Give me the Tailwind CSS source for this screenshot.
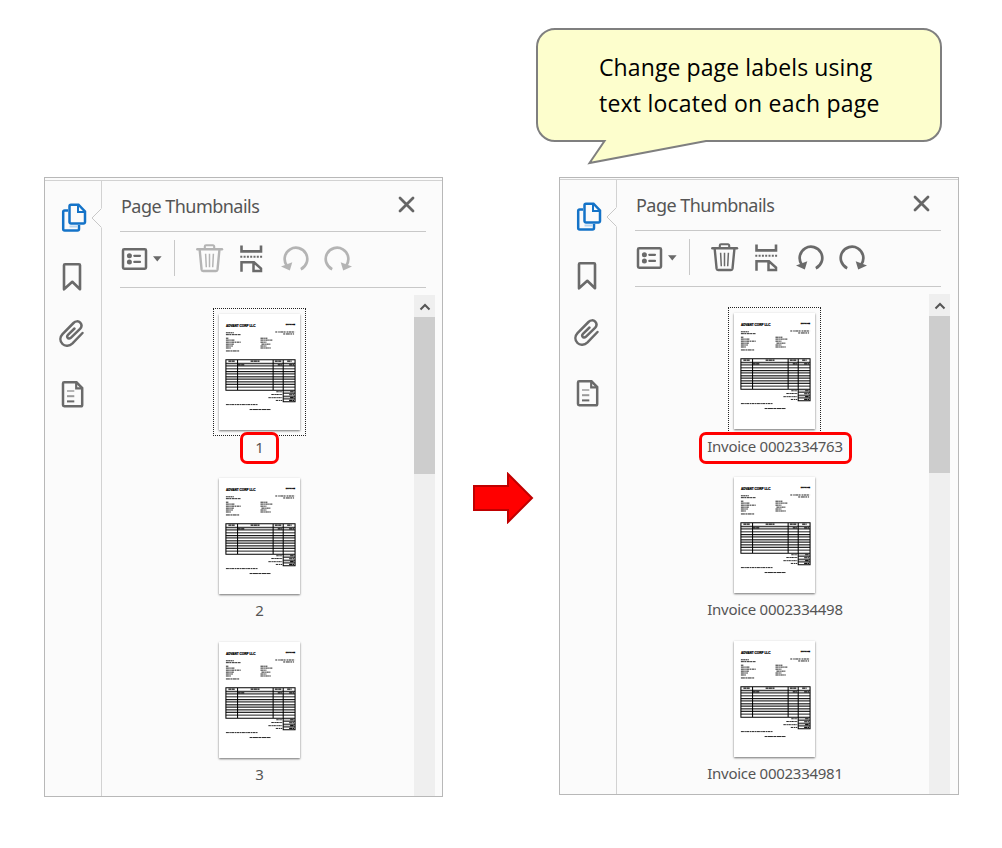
<!DOCTYPE html>
<html lang="en">
<head>
<meta charset="utf-8">
<title>Page labels</title>
<script src="https://cdn.jsdelivr.net/npm/@tailwindcss/browser@4"></script>
</head>
<body class="bg-white">
<svg class="hidden">
  <symbol id="pages" viewBox="60 201 28 32">
    <path d="M68 210.600H64.700a1.500 1.500 0 0 0-1.500 1.500V229a1.500 1.500 0 0 0 1.500 1.500H77.500a1.500 1.500 0 0 0 1.500-1.500V225" fill="none" stroke="currentColor" stroke-width="2.500"/>
    <path d="M69.500 226.500H77.500" stroke="#b5d5f2" stroke-width="2"/>
    <path d="M71 204.700H78.500L85 211.500V222.100a1.500 1.500 0 0 1-1.500 1.500H71a1.500 1.500 0 0 1-1.500-1.500V206.200a1.500 1.500 0 0 1 1.500-1.500Z" fill="#fbfbfb" stroke="currentColor" stroke-width="2.500"/>
    <path d="M78 204.500V212H85.500" fill="none" stroke="currentColor" stroke-width="2"/>
  </symbol>
  <symbol id="bookmark" viewBox="60 261 28 32">
    <path d="M65 264.200H79a1 1 0 0 1 1 1V289.300L72.300 281.800L64 289.300V265.200a1 1 0 0 1 1-1Z" fill="none" stroke="currentColor" stroke-width="2.600" stroke-linejoin="round"/>
  </symbol>
  <symbol id="clip" viewBox="58 318 28 32">
    <path d="M82.500 333L72.500 343.300C69.500 346.200 65 346.600 62.500 344C59.500 341 59.900 337 62.500 334.200L73.500 323C75.500 321 78.500 320.800 80.200 322.600C82 324.500 81.700 327 80 328.900L70.800 337.800C69.500 338.900 68.300 338.600 67.600 337.700C66.900 336.800 67.200 335.600 68.200 334.600L74.500 328.500" fill="none" stroke="currentColor" stroke-width="2.500" stroke-linecap="round"/>
  </symbol>
  <symbol id="doc" viewBox="60 379 28 32">
    <path d="M64.200 382.300H76.500L82.200 388V405a1.300 1.300 0 0 1-1.300 1.300H64.200a1.200 1.200 0 0 1-1.200-1.200V383.500a1.200 1.200 0 0 1 1.200-1.200Z" fill="none" stroke="currentColor" stroke-width="2.500"/>
    <path d="M76.200 382.500V388.300H82" fill="none" stroke="currentColor" stroke-width="2.200"/>
    <path d="M67 391H74.300" stroke="#b5b5b5" stroke-width="2"/>
    <path d="M67 396.200H74.300" stroke="#999" stroke-width="2"/>
    <path d="M67 401.400H74.300" stroke="currentColor" stroke-width="2"/>
  </symbol>
  <symbol id="options" viewBox="120 242 44 32">
    <rect x="123" y="249.200" width="23" height="19.500" rx="1.200" fill="none" stroke="currentColor" stroke-width="2.500"/>
    <circle cx="129.400" cy="255.800" r="2.500" fill="currentColor"/><circle cx="129.400" cy="261.900" r="2.500" fill="currentColor"/>
    <path d="M134.300 255.800H140M134.300 261.900H140" stroke="currentColor" stroke-width="2.200" stroke-linecap="round"/>
    <path d="M153 256.300H161.600L157.300 261.500Z" fill="currentColor"/>
  </symbol>
  <symbol id="trash" viewBox="195 242 30 32">
    <path d="M197.300 249.300H222" stroke="currentColor" stroke-width="2.400" stroke-linecap="round"/>
    <path d="M204.800 248.500V246.500a1.200 1.200 0 0 1 1.200-1.200H213a1.200 1.200 0 0 1 1.200 1.200V248.500" fill="none" stroke="currentColor" stroke-width="2.100"/>
    <path d="M199.700 250L201.600 269.700a1.500 1.500 0 0 0 1.500 1.300H216a1.500 1.500 0 0 0 1.500-1.300L219.400 250" fill="none" stroke="currentColor" stroke-width="2.400"/>
    <path d="M205.600 253.700L206.300 267.300M209.500 253.700V267.300M213.400 253.700L212.700 267.300" stroke="currentColor" stroke-width="1.500"/>
  </symbol>
  <symbol id="split" viewBox="237 242 28 32">
    <path d="M241.500 245.500V251.400H261V245.500" fill="none" stroke="currentColor" stroke-width="2.600"/>
    <path d="M240.300 256.800H262.300" stroke="currentColor" stroke-width="1.900" stroke-dasharray="2 1.300"/>
    <path d="M241.500 271.800V262.300H254L261 268.500V271H253.500V263" fill="none" stroke="currentColor" stroke-width="2.500"/>
  </symbol>
  <symbol id="turn" viewBox="280 242 32 32">
    <path d="M286.600 265.300A11.300 11.300 0 1 1 300.800 269.200" fill="none" stroke="currentColor" stroke-width="2.700"/>
    <path d="M281 266.600L292.300 262.200L289.800 270.500Z" fill="currentColor"/>
  </symbol>
  <symbol id="sheet" viewBox="0 0 82 117">
    <g font-family="Liberation Sans, sans-serif" font-weight="bold" fill="#000">
      <text x="7" y="13" font-size="3.600" textLength="30" lengthAdjust="spacingAndGlyphs" stroke="#000" stroke-width=".25">ADVANT CORP LLC</text>
      <text x="67.500" y="11" font-size="2.500" textLength="9.500" lengthAdjust="spacingAndGlyphs" stroke="#000" stroke-width=".3">INVOICE</text>
    </g>
    <g stroke="#000" stroke-width="1" fill="none" opacity=".85">
      <path d="M7 18.800H15" stroke-dasharray="2 .3"/><path d="M7 20.700H22" stroke-dasharray="3 .4 2 .5"/>
      <path d="M57 18H77" stroke-dasharray="2 1 1.500 .5 3 .4"/><path d="M65 20H76" stroke-dasharray="2 .7 4 .5"/>
      <path d="M7 24.300H9.500M7 26.200H16M7 28.300H22M7 30.300H15M7 32.200H14M7 34.200H12" stroke-dasharray="3 .4 1.500 .5"/>
      <path d="M42 24.300H49M42 26.200H54M42 28.300H48M43 30.300H52M42 32.200H48M42 34.200H52.500" stroke-dasharray="2.500 .4 1.500 .5"/>
      <path d="M7 37.200H20.500" stroke-dasharray="4 .5 2 .4"/>
      <path d="M7 91.500H39" stroke-dasharray="3 .5 1.500 .4"/><path d="M31 96.500H52.500" stroke-dasharray="3 .4 5 .4"/>
      <path d="M58 78.500H64M53 81.300H64M50 84.500H64M57.500 87.300H64" stroke-dasharray="2.500 .6 1.500 .4"/>
    </g>
    <path d="M7 49.700H77V52.500H7zM7 58H77v2.500H7zM7 63.300H77v2.500H7zM7 68.500H77v2.500H7zM65 77.500H77v2.500H65zM65 83.300H77v2.500H65z" fill="#ccc"/>
    <path d="M7 46H77V77H7ZM18.800 46V77M54.800 46V77M65 46V88.600H77V77" fill="none" stroke="#000" stroke-width="1.050"/>
    <path d="M7 49.700H77M7 52.400H77M7 55.300H77M7 58H77M7 60.500H77M7 63.300H77M7 65.800H77M7 68.400H77M7 71.100H77M7 73.800H77M65 80H77M65 83H77M65 85.800H77" stroke="#000" stroke-width=".9"/>
    <path d="M9.500 47.500H16M32 47.500H41M56.500 47.500H63.500M69 47.500H73.500M19 51.200H26M59.500 51.200H64M71 51.200H76M72 78.500H76M71 81.500H76M72 84.500H76M71 87.200H76" stroke="#111" stroke-width="1.200" stroke-dasharray="3 .4"/>
  </symbol>
</svg>

<div class="w-[1002px] h-[848px] overflow-hidden pt-[27px]">
  <div class="relative ml-[535px] w-[408px] h-[138px] mb-[12px] pl-[64px] pt-[22px]">
    <svg class="absolute inset-0" width="408" height="138" viewBox="535 27 408 138">
      <path d="M555 29H923A18 18 0 0 1 941 47V123A18 18 0 0 1 923 141H706L589.500 163L604.500 141H555A18 18 0 0 1 537 123V47A18 18 0 0 1 555 29Z" fill="#fdfecd" stroke="#7f7f7f" stroke-width="2"/>
    </svg>
    <p class="relative font-['Open_Sans',sans-serif] text-[23px] leading-[36px] text-black whitespace-nowrap"><span class="tracking-[0.1px]">Change page labels using</span><br><span class="tracking-[0.23px]">text located on each page</span></p>
  </div>

  <div class="flex items-start pl-[44px] font-['Noto_Sans',sans-serif] text-[#555]">
    <section class="w-[399px] h-[620px] border border-[#b8b8b8] bg-[#fbfbfb] flex">
      <nav class="w-[57px] shrink-0 border-t border-r border-[#d2d2d2] mt-[2px] relative flex flex-col pl-[15px] pt-[20px] text-[#6a6a6a]">
        <svg class="w-[28px] h-[32px] text-[#1473c8]"><use href="#pages"/></svg>
        <svg class="w-[28px] h-[32px] mt-[28px]"><use href="#bookmark"/></svg>
        <svg class="w-[28px] h-[32px] mt-[25px] -ml-[2px]"><use href="#clip"/></svg>
        <svg class="w-[28px] h-[32px] mt-[29px]"><use href="#doc"/></svg>
        <svg class="absolute left-[46px] top-[27px]" width="12" height="20"><path d="M11 0L1.500 10L11 20" fill="#fbfbfb"/><path d="M12 0H10V20H12" fill="#fbfbfb"/><path d="M10.500 0.500L1 10L10.500 19.500" fill="none" stroke="#c8c8c8"/></svg>
      </nav>
      <div class="flex-1 border-t border-[#d2d2d2] mt-[2px] flex flex-col min-w-0">
        <header class="ml-[18px] w-[306px] h-[51px] border-b border-[#c8c8c8] flex justify-between items-center pl-px pr-[11px]">
          <h2 class="text-[18px] leading-[24px] tracking-[-0.53px] whitespace-nowrap">Page Thumbnails</h2>
          <svg class="mb-[3px]" width="17" height="17" viewBox="0 0 17 17"><path d="M2 2L15 15M15 2L2 15" stroke="#666" stroke-width="2.800" stroke-linecap="round"/></svg>
        </header>
        <div class="ml-[18px] w-[306px] h-[56px] border-b border-[#c8c8c8] flex items-center pb-[3px] text-[#6a6a6a]">
          <svg class="w-[44px] h-[32px]"><use href="#options"/></svg>
          <i class="w-px h-[36px] bg-[#c8c8c8] ml-[10px]"></i>
          <svg class="w-[30px] h-[32px] ml-[20px] text-[#b4b4b4]"><use href="#trash"/></svg>
          <svg class="w-[28px] h-[32px] ml-[12px]"><use href="#split"/></svg>
          <svg class="w-[32px] h-[32px] ml-[15px] text-[#b4b4b4]"><use href="#turn"/></svg>
          <svg class="w-[32px] h-[32px] ml-[9px] -scale-x-100 text-[#b4b4b4]"><use href="#turn"/></svg>
        </div>
        <div class="flex flex-1 pt-[7px]">
          <div class="flex-1 flex flex-col items-center pl-[3px] pt-[13px]">
            <div class="w-[93px] h-[128px] border border-dotted border-[#222] p-[5px]"><svg class="w-[81px] h-[116px] bg-white shadow-[0_1px_2px_rgba(0,0,0,0.55)]"><use href="#sheet"/></svg></div>
            <div class="-mt-[4px] w-[39px] h-[32px] shrink-0 rounded-[7px] border-3 border-[#f00] bg-[#fbfbfb] flex items-center justify-center text-[15px] leading-none pb-[2px]">1</div>
            <svg class="w-[81px] h-[116px] mt-[14px] bg-white shadow-[0_1px_2px_rgba(0,0,0,0.55)]"><use href="#sheet"/></svg>
            <div class="h-[48px] pt-[6px] text-[15px] leading-[20px]">2</div>
            <svg class="w-[81px] h-[116px] bg-white shadow-[0_1px_2px_rgba(0,0,0,0.55)]"><use href="#sheet"/></svg>
            <div class="pt-[6px] text-[15px] leading-[20px]">3</div>
          </div>
          <div class="w-[21px] mr-[7px] bg-[#efefef] flex flex-col">
            <div class="h-[22px] flex items-center justify-center pt-px"><svg width="12" height="8" viewBox="0 0 12 8"><path d="M1.500 6.500L6 2L10.500 6.500" fill="none" stroke="#555" stroke-width="2"/></svg></div>
            <div class="h-[157px] bg-[#cdcdcd]"></div>
          </div>
        </div>
      </div>
    </section>

    <svg class="ml-[29px] mt-[295px]" width="62" height="52" viewBox="472 472 62 52"><path d="M474 486H508V474L532 498L508 522V510H474Z" fill="#f00" stroke="#c00000" stroke-width="2"/></svg>

    <section class="ml-[25px] w-[400px] h-[618px] border border-[#b8b8b8] bg-[#fbfbfb] flex">
      <nav class="w-[57px] shrink-0 border-t border-r border-[#d2d2d2] mt-px relative flex flex-col pl-[15px] pt-[20px] text-[#6a6a6a]">
        <svg class="w-[28px] h-[32px] text-[#1473c8]"><use href="#pages"/></svg>
        <svg class="w-[28px] h-[32px] mt-[28px]"><use href="#bookmark"/></svg>
        <svg class="w-[28px] h-[32px] mt-[25px] -ml-[2px]"><use href="#clip"/></svg>
        <svg class="w-[28px] h-[32px] mt-[29px]"><use href="#doc"/></svg>
        <svg class="absolute left-[46px] top-[27px]" width="12" height="20"><path d="M11 0L1.500 10L11 20" fill="#fbfbfb"/><path d="M12 0H10V20H12" fill="#fbfbfb"/><path d="M10.500 0.500L1 10L10.500 19.500" fill="none" stroke="#c8c8c8"/></svg>
      </nav>
      <div class="flex-1 border-t border-[#d2d2d2] mt-px flex flex-col min-w-0">
        <header class="ml-[18px] w-[306px] h-[51px] border-b border-[#c8c8c8] flex justify-between items-center pl-px pr-[11px]">
          <h2 class="text-[18px] leading-[24px] tracking-[-0.53px] whitespace-nowrap">Page Thumbnails</h2>
          <svg class="mb-[3px]" width="17" height="17" viewBox="0 0 17 17"><path d="M2 2L15 15M15 2L2 15" stroke="#666" stroke-width="2.800" stroke-linecap="round"/></svg>
        </header>
        <div class="ml-[18px] w-[306px] h-[56px] border-b border-[#c8c8c8] flex items-center pb-[3px] text-[#6a6a6a]">
          <svg class="w-[44px] h-[32px]"><use href="#options"/></svg>
          <i class="w-px h-[36px] bg-[#c8c8c8] ml-[10px]"></i>
          <svg class="w-[30px] h-[32px] ml-[20px]"><use href="#trash"/></svg>
          <svg class="w-[28px] h-[32px] ml-[12px]"><use href="#split"/></svg>
          <svg class="w-[32px] h-[32px] ml-[15px]"><use href="#turn"/></svg>
          <svg class="w-[32px] h-[32px] ml-[9px] -scale-x-100"><use href="#turn"/></svg>
        </div>
        <div class="flex flex-1 pt-[7px]">
          <div class="flex-1 flex flex-col items-center pl-[3px] pt-[13px]">
            <div class="w-[93px] h-[128px] border border-dotted border-[#222] p-[5px]"><svg class="w-[81px] h-[116px] bg-white shadow-[0_1px_2px_rgba(0,0,0,0.55)]"><use href="#sheet"/></svg></div>
            <div class="-mt-[3px] ml-px w-[153px] h-[32px] shrink-0 rounded-[7px] border-3 border-[#f00] bg-[#fbfbfb] flex items-center justify-center text-[15px] tracking-[-0.27px] leading-none pb-[4px] whitespace-nowrap">Invoice 0002334763</div>
            <svg class="w-[81px] h-[116px] mt-[13px] bg-white shadow-[0_1px_2px_rgba(0,0,0,0.55)]"><use href="#sheet"/></svg>
            <div class="h-[48px] pt-[6px] ml-px text-[15px] tracking-[-0.27px] leading-[20px] whitespace-nowrap">Invoice 0002334498</div>
            <svg class="w-[81px] h-[116px] bg-white shadow-[0_1px_2px_rgba(0,0,0,0.55)]"><use href="#sheet"/></svg>
            <div class="pt-[6px] ml-px text-[15px] tracking-[-0.27px] leading-[20px] whitespace-nowrap">Invoice 0002334981</div>
          </div>
          <div class="w-[21px] mr-[8px] bg-[#efefef] flex flex-col">
            <div class="h-[22px] flex items-center justify-center pt-px"><svg width="12" height="8" viewBox="0 0 12 8"><path d="M1.500 6.500L6 2L10.500 6.500" fill="none" stroke="#555" stroke-width="2"/></svg></div>
            <div class="h-[157px] bg-[#cdcdcd]"></div>
          </div>
        </div>
      </div>
    </section>
  </div>
</div>
</body>
</html>
